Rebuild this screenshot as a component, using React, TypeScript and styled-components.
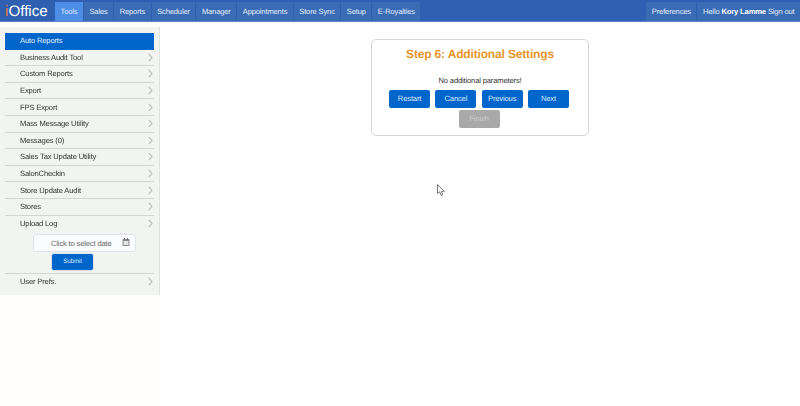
import React from 'react';
import styled, { createGlobalStyle } from 'styled-components';

const GlobalStyle = createGlobalStyle`
  html, body {
    margin: 0;
    padding: 0;
    height: 100%;
    background: #fffefb;
    font-family: 'Liberation Sans', Arial, sans-serif;
    text-rendering: geometricPrecision;
    letter-spacing: -0.01em;
    overflow: hidden;
  }
`;

const Page = styled.div`
  position: relative;
  width: 800px;
  height: 406px;
  overflow: hidden;
  opacity: 0.999;
  filter: blur(0.35px);
`;

const NavBar = styled.div`
  display: flex;
  align-items: flex-end;
  justify-content: space-between;
  height: 21px;
  background: #2f5fb0;
  border-bottom: 1px solid #5b86c6;
`;

const NavGroup = styled.div`
  display: flex;
  align-items: stretch;
  gap: 1px;
  height: 19px;
`;

const Logo = styled.div`
  width: 53px;
  margin-right: 1px;
  padding-left: 5px;
  box-sizing: border-box;
  font-size: 15.2px;
  letter-spacing: normal;
  line-height: 19px;
  color: #fff;
  white-space: nowrap;
  span {
    color: #e0803a;
  }
`;

const NavTab = styled.div<{ $active?: boolean }>`
  display: flex;
  align-items: center;
  padding: 0 5.5px;
  font-size: 7.6px;
  white-space: nowrap;
  color: ${(p) => (p.$active ? '#dfeaf8' : '#e4ecf7')};
  background: ${(p) => (p.$active ? '#4d8de6' : '#3a6bb5')};
  b {
    margin: 0 2px;
    color: #fff;
  }
`;

const Body = styled.div`
  display: flex;
  align-items: flex-start;
`;

const Sidebar = styled.div`
  width: 160px;
  height: 268px;
  margin-top: 5px;
  padding: 6px 5px 0;
  box-sizing: border-box;
  background: #f1f4f1;
  border-right: 1px solid #dfe3df;
`;

const Row = styled.div<{ $active?: boolean }>`
  position: relative;
  display: flex;
  align-items: center;
  justify-content: space-between;
  height: 16.6px;
  box-sizing: border-box;
  padding: 0 1px 0 15px;
  font-size: 7.6px;
  color: ${(p) => (p.$active ? '#e6eefa' : '#333')};
  background: ${(p) => (p.$active ? '#0066cc' : 'transparent')};
  border-bottom: 1px solid ${(p) => (p.$active ? '#0066cc' : '#d3d7d3')};
`;

const PlainRow = styled(Row)`
  border-bottom: none;
`;

const LastRow = styled(PlainRow)`
  height: 15px;
`;

const Chevron = () => (
  <svg width="5" height="9" viewBox="0 0 5 9">
    <path d="M0.8 0.8 L4 4.5 L0.8 8.2" fill="none" stroke="#b9bdb9" strokeWidth="1.1" />
  </svg>
);

const DateForm = styled.div`
  display: flex;
  flex-direction: column;
  align-items: center;
  padding-bottom: 2px;
  border-bottom: 1px solid #d3d7d3;
`;

const DateInput = styled.div`
  display: flex;
  align-items: flex-start;
  justify-content: space-between;
  width: 103px;
  height: 18px;
  margin: 2px 0 1px 10px;
  padding: 0 5px 0 17px;
  box-sizing: border-box;
  line-height: 17px;
  font-size: 7.6px;
  color: #666;
  background: #fbfcff;
  border: 1px solid #dde3ee;
  border-radius: 3px;
  svg {
    margin-top: 3px;
  }
`;

const SubmitButton = styled.div`
  width: 41px;
  height: 16px;
  line-height: 16px;
  text-align: center;
  font-size: 6.3px;
  color: #dfe9f8;
  background: #0066cc;
  border: 1px solid #d8dfe8;
  border-radius: 3px;
  margin-right: 14px;
`;

const Main = styled.div`
  flex: 1;
  display: flex;
  justify-content: center;
  padding-top: 17px;
  height: 384px;
  box-sizing: border-box;
  background: #fefeff;
`;

const Card = styled.div`
  width: 218px;
  height: 97px;
  box-sizing: border-box;
  padding-top: 6px;
  text-align: center;
  background: #fff;
  border: 1px solid #d6d6d6;
  border-radius: 5px;
`;

const Title = styled.div`
  font-size: 12px;
  font-weight: bold;
  line-height: 16px;
  color: #e5952a;
`;

const Message = styled.div`
  margin-top: 14px;
  font-size: 7.6px;
  line-height: 10px;
  color: #333;
`;

const Buttons = styled.div`
  display: flex;
  flex-wrap: wrap;
  justify-content: center;
  gap: 2px 5.3px;
  width: 180px;
  margin: 4px 0 0 17px;
`;

const Button = styled.div<{ $disabled?: boolean }>`
  width: 41px;
  height: 18px;
  line-height: 18px;
  font-size: 7.6px;
  border-radius: 2px;
  color: ${(p) => (p.$disabled ? '#c9c9c9' : '#dfe9f8')};
  background: ${(p) => (p.$disabled ? '#a9a9a9' : '#0066cc')};
`;

const Cursor = styled.svg`
  position: absolute;
  left: 437px;
  top: 184px;
`;

const tabs = ['Sales', 'Reports', 'Scheduler', 'Manager', 'Appointments', 'Store Sync', 'Setup', 'E-Royalties'];
const items = [
  'Business Audit Tool',
  'Custom Reports',
  'Export',
  'FPS Export',
  'Mass Message Utility',
  'Messages (0)',
  'Sales Tax Update Utility',
  'SalonCheckin',
  'Store Update Audit',
  'Stores',
];

export default function App() {
  return (
    <Page>
      <GlobalStyle />
      <NavBar>
        <NavGroup>
          <Logo>
            <span>i</span>Office
          </Logo>
          <NavTab $active>Tools</NavTab>
          {tabs.map((t) => (
            <NavTab key={t}>{t}</NavTab>
          ))}
        </NavGroup>
        <NavGroup>
          <NavTab>Preferences</NavTab>
          <NavTab>
            Hello<b>Kory Lamme</b>Sign out
          </NavTab>
        </NavGroup>
      </NavBar>
      <Body>
        <Sidebar>
          <Row $active>Auto Reports</Row>
          {items.map((i) => (
            <Row key={i}>
              {i}
              <Chevron />
            </Row>
          ))}
          <PlainRow>
            Upload Log
            <Chevron />
          </PlainRow>
          <DateForm>
            <DateInput>
              Click to select date
              <svg width="8" height="8" viewBox="0 0 8 8">
                <rect x="0.5" y="1" width="7" height="7" rx="1" fill="#8b8b8b" />
                <rect x="1.5" y="3" width="5" height="4" fill="#e4e4e4" />
                <rect x="2" y="0" width="1" height="2" fill="#666" />
                <rect x="5" y="0" width="1" height="2" fill="#666" />
              </svg>
            </DateInput>
            <SubmitButton>Submit</SubmitButton>
          </DateForm>
          <LastRow>
            User Prefs.
            <Chevron />
          </LastRow>
        </Sidebar>
        <Main>
          <Card>
            <Title>Step 6: Additional Settings</Title>
            <Message>No additional parameters!</Message>
            <Buttons>
              <Button>Restart</Button>
              <Button>Cancel</Button>
              <Button>Previous</Button>
              <Button>Next</Button>
              <Button $disabled>Finish</Button>
            </Buttons>
          </Card>
        </Main>
      </Body>
      <Cursor width="9" height="13" viewBox="0 0 9 13">
        <path d="M0.5 0.5 L0.5 9.5 L2.6 7.8 L4.2 11.6 L5.8 10.9 L4.3 7.4 L7.4 7.2 Z" fill="#fff" stroke="#555" strokeWidth="0.8" />
      </Cursor>
    </Page>
  );
}
